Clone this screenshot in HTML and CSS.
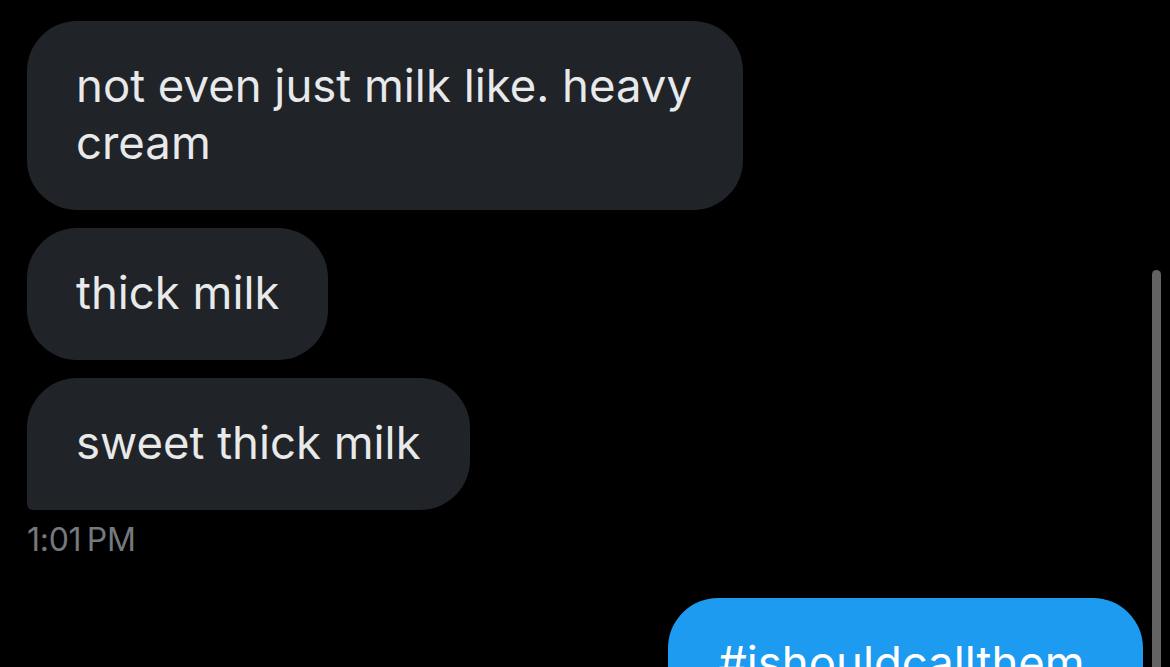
FILE: index.html
```html
<!DOCTYPE html>
<html lang="en">
<head>
<meta charset="utf-8">
<title>Messages</title>
<link rel="stylesheet" href="styles.css">
</head>
<body>
<main class="thread">
  <div class="group incoming">
    <div class="bubble wide">not even just milk like. heavy cream</div>
    <div class="bubble">thick milk</div>
    <div class="bubble last">sweet thick milk</div>
    <div class="time">1:01&#8201;PM</div>
  </div>
  <div class="group outgoing">
    <div class="bubble sent">#ishouldcallthem</div>
  </div>
</main>
<div class="scrollbar"></div>
</body>
</html>
```
FILE: styles.css
```css
html, body {
  margin: 0;
  padding: 0;
  background: #000;
  height: 100%;
  overflow: hidden;
}
body {
  font-family: Inter, "Open Sans", "Liberation Sans", sans-serif;
  color: #e7e9ea;
  position: relative;
}
.thread {
  display: flex;
  flex-direction: column;
  padding: 21px 27px 0 27px;
}
.group {
  display: flex;
  flex-direction: column;
  gap: 18px;
}
.incoming { align-items: flex-start; }
.outgoing { align-items: flex-end; margin-top: 38px; }
.bubble {
  box-sizing: border-box;
  background: #202327;
  border-radius: 50px;
  padding: 36px 49px 39px 49px;
  font-size: 45.5px;
  line-height: 57px;
}
.bubble.wide { max-width: 716px; }
.bubble.last { border-bottom-left-radius: 6px; }
.time {
  margin-top: -8px;
  font-size: 32px;
  line-height: 40px;
  color: #75787c;
  letter-spacing: -0.3px;
}
.bubble.sent {
  background: #1d9bf0;
  color: #fff;
  width: 475px;
  padding-left: 50px;
}
.scrollbar {
  position: absolute;
  left: 1152px;
  top: 270px;
  width: 9px;
  height: 420px;
  border-radius: 5px;
  background: #636363;
}
```
